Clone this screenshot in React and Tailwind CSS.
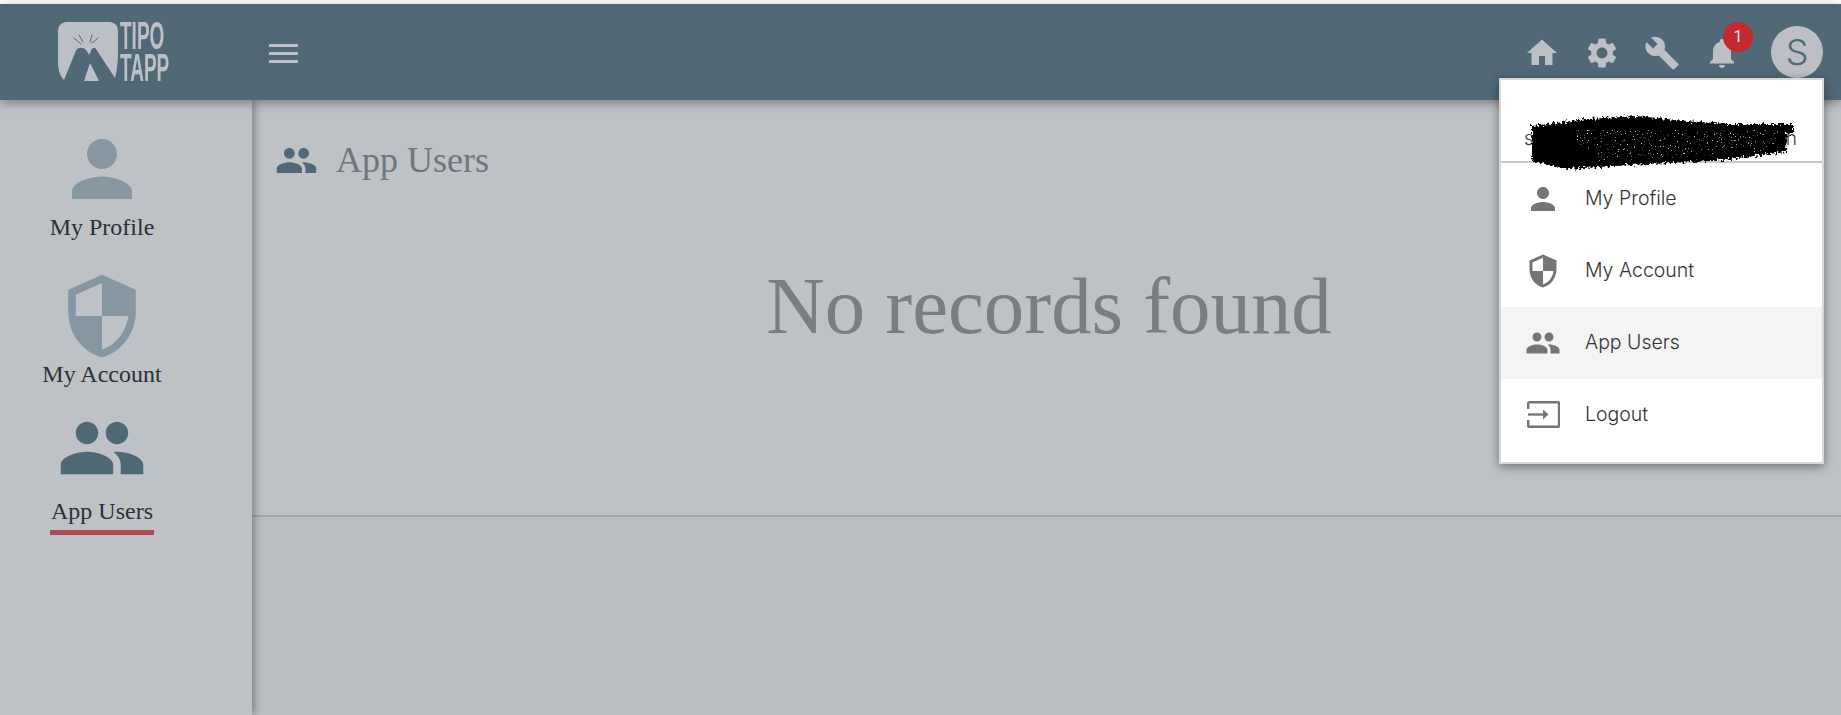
import React from 'react';

const PERSON = "M12 12c2.21 0 4-1.79 4-4s-1.79-4-4-4-4 1.79-4 4 1.79 4 4 4zm0 2c-2.67 0-8 1.34-8 4v2h16v-2c0-2.66-5.33-4-8-4z";
const SHIELD = "M12 1L3 5v6c0 5.55 3.84 10.74 9 12 5.16-1.26 9-6.45 9-12V5l-9-4zm0 10.99h7c-.53 4.12-3.28 7.79-7 8.94V12H5V6.3l7-3.11v8.8z";
const PEOPLE = "M16 11c1.66 0 2.99-1.34 2.99-3S17.66 5 16 5c-1.66 0-3 1.34-3 3s1.34 3 3 3zm-8 0c1.66 0 2.99-1.34 2.99-3S9.66 5 8 5C6.34 5 5 6.34 5 8s1.34 3 3 3zm0 2c-2.33 0-7 1.17-7 3.5V19h14v-2.5c0-2.33-4.67-3.5-7-3.5zm8 0c-.29 0-.62.02-.97.05 1.16.84 1.97 1.97 1.97 3.45V19h6v-2.5c0-2.33-4.67-3.5-7-3.5z";
const HOME = "M10 20v-6h4v6h5v-8h3L12 3 2 12h3v8z";
const GEAR = "M19.14 12.94c.04-.3.06-.61.06-.94 0-.32-.02-.64-.07-.94l2.03-1.58c.18-.14.23-.41.12-.61l-1.92-3.32c-.12-.22-.37-.29-.59-.22l-2.39.96c-.5-.38-1.03-.7-1.62-.94l-.36-2.54c-.04-.24-.24-.41-.48-.41h-3.84c-.24 0-.43.17-.47.41l-.36 2.54c-.59.24-1.13.57-1.62.94l-2.39-.96c-.22-.08-.47 0-.59.22L2.74 8.87c-.12.21-.08.47.12.61l2.03 1.58c-.05.3-.09.63-.09.94s.02.64.07.94l-2.03 1.58c-.18.14-.23.41-.12.61l1.92 3.32c.12.22.37.29.59.22l2.39-.96c.5.38 1.03.7 1.62.94l.36 2.54c.05.24.24.41.48.41h3.84c.24 0 .44-.17.47-.41l.36-2.54c.59-.24 1.13-.56 1.62-.94l2.39.96c.22.08.47 0 .59-.22l1.92-3.32c.12-.22.07-.47-.12-.61l-2.01-1.58zM12 15.6c-1.98 0-3.6-1.62-3.6-3.6s1.62-3.6 3.6-3.6 3.6 1.62 3.6 3.6-1.62 3.6-3.6 3.6z";
const WRENCH = "M22.7 19l-9.1-9.1c.9-2.3.4-5-1.5-6.9-2-2-5-2.4-7.4-1.3L9 6 6 9 1.6 4.7C.4 7.1.9 10.1 2.9 12.1c1.9 1.9 4.6 2.4 6.9 1.5l9.1 9.1c.4.4 1 .4 1.4 0l2.3-2.3c.5-.4.5-1.1.1-1.4z";
const BELL = "M12 22c1.1 0 2-.9 2-2h-4c0 1.1.89 2 2 2zm6-6v-5c0-3.07-1.64-5.64-4.5-6.32V4c0-.83-.67-1.5-1.5-1.5s-1.5.67-1.5 1.5v.68C7.63 5.36 6 7.92 6 11v5l-2 2v1h16v-1l-2-2z";

const Icon = ({ d, className }) => (
  <svg viewBox="0 0 24 24" fill="currentColor" className={className}>
    <path d={d} />
  </svg>
);

const LogoutIcon = () => (
  <svg viewBox="0 0 33 27" fill="none" stroke="#757575" strokeWidth="2.4" className="w-[33px] h-[27px]">
    <path d="M1.2 8V2.6a1.4 1.4 0 0 1 1.4-1.4h28a1.4 1.4 0 0 1 1.4 1.4v21.8a1.4 1.4 0 0 1-1.4 1.4h-28a1.4 1.4 0 0 1-1.4-1.4V19" />
    <path d="M1 13.5h19" />
    <path d="M16 8.5l5.5 5-5.5 5" fill="#757575" stroke="none" />
  </svg>
);

const Logo = () => (
  <svg viewBox="0 0 60 60" className="w-[60px] h-[60px]">
    <path d="M9 0H51C57 0 60 4 60 9V30C60 40 59 48 57 56L38 27C37 25 34 25 33 29L31 33C29 28 26 25 22 26C19 26 18 28 17 31L6 58C2 54 0 48 0 40V9C0 4 3 0 9 0Z" fill="#bcc0c6" />
    <path d="M32 41L41 59H26Z" fill="#bcc0c6" />
    <g stroke="#516876" strokeWidth="1" strokeLinecap="round">
      <path d="M16 16L23 22" />
      <path d="M21 13L25 20" />
      <path d="M34 13L32 20" />
      <path d="M40 16L34 21" />
    </g>
  </svg>
);

// the address is blacked out in the picture, only its first and last letters show
const Scribble = () => (
  <svg viewBox="0 0 265 56" className="absolute left-[29px] top-[36px] w-[265px] h-[56px] overflow-visible">
    <defs>
      <filter id="rough" x="-5%" y="-20%" width="110%" height="140%">
        <feTurbulence type="fractalNoise" baseFrequency="0.4" numOctaves="2" seed="4" result="n" />
        <feDisplacementMap in="SourceGraphic" in2="n" scale="8" />
      </filter>
      <filter id="speckle" x="0" y="0" width="100%" height="100%">
        <feTurbulence type="fractalNoise" baseFrequency="0.7" numOctaves="2" seed="9" />
        <feColorMatrix values="0 0 0 0 0.6  0 0 0 0 0.6  0 0 0 0 0.6  0 0 0 9 -6" result="dots" />
        <feComposite in="dots" in2="SourceAlpha" operator="in" />
      </filter>
    </defs>
    <path filter="url(#rough)" fill="#000" d="M2 10L57 3L107 0L157 5L197 8L263 8L263 17L257 18L256 36L183 45L117 48L37 53L2 45Z" />
    <path filter="url(#speckle)" fill="#000" d="M40 14L250 14L250 34L180 40L60 46Z" />
  </svg>
);

const menuItems = [
  { label: 'My Profile', d: PERSON },
  { label: 'My Account', d: SHIELD },
  { label: 'App Users', d: PEOPLE, active: true },
  { label: 'Logout', logout: true },
];

const App = () => {
  return (
    <div className="relative w-[1841px] h-[715px] overflow-hidden bg-white pt-1 font-['Liberation_Serif',serif]">
      {/* Top bar */}
      <header className="relative z-10 h-24 bg-[#516876] shadow-[0_3px_10px_rgba(0,0,0,0.35)] flex items-center pl-[58px] pr-[18px]">
        <div className="flex items-center w-[211px]">
          <Logo />
          <div className="ml-[2px] w-[50px] font-['Liberation_Sans',sans-serif] font-bold text-[38px] leading-8 text-[#bcc0c6]">
            <div className="origin-left scale-x-[0.5] whitespace-nowrap">TIPO</div>
            <div className="origin-left scale-x-[0.5] whitespace-nowrap">TAPP</div>
          </div>
        </div>
        <div className="flex flex-col gap-[5px] w-[29px] mt-[2px]">
          <span className="h-[3px] bg-[#bcc0c6]" />
          <span className="h-[3px] bg-[#bcc0c6]" />
          <span className="h-[3px] bg-[#bcc0c6]" />
        </div>

        <div className="ml-auto flex items-center text-[#bcc0c6]">
          <div className="flex gap-6 mr-[31px] mt-[2px]">
            <Icon d={HOME} className="w-9 h-9" />
            <Icon d={GEAR} className="w-9 h-9" />
            <Icon d={WRENCH} className="w-9 h-9" />
            <div className="relative w-9 h-9">
              <Icon d={BELL} className="w-9 h-9" />
              <span className="absolute -top-[13px] left-[19px] w-[30px] h-[30px] rounded-full bg-[#c5282f] flex items-center justify-center font-['Roboto',sans-serif] text-[17px] text-[#e8e0e0]">1</span>
            </div>
          </div>
          <div className="w-[52px] h-[52px] rounded-full bg-[#bcc0c6] flex items-center justify-center font-['Inter',sans-serif] text-[36px] font-light text-[#516876]">S</div>
        </div>
      </header>

      <div className="flex h-[615px]">
        {/* Sidebar */}
        <aside className="relative z-[5] w-[252px] pr-12 bg-[#bec2c7] shadow-[3px_0_8px_rgba(0,0,0,0.3)] flex flex-col items-center text-[24px] leading-7 text-[#2e3033]">
          <div className="flex flex-col items-center mt-6">
            <Icon d={PERSON} className="w-[90px] h-[90px] text-[#8797a2]" />
            <span className="-mt-px">My Profile</span>
          </div>
          <div className="flex flex-col items-center mt-[30px]">
            <Icon d={SHIELD} className="w-[90px] h-[90px] text-[#8797a2]" />
            <span className="-mt-px">My Account</span>
          </div>
          <div className="flex flex-col items-center mt-[15px]">
            <Icon d={PEOPLE} className="w-[90px] h-[90px] text-[#516876]" />
            <span className="mt-1 px-px pb-[5px] border-b-[5px] border-[#b04a57]">App Users</span>
          </div>
        </aside>

        {/* Content */}
        <main className="flex-1 bg-[#babfc3]">
          <section className="h-[417px] bg-[#bec1c6] border-b-2 border-[#a3a7ab] pl-[23px] pt-[38px]">
            <div className="flex items-center gap-[18px] text-[#6f767c]">
              <Icon d={PEOPLE} className="w-[43px] h-[43px] text-[#516876]" />
              <h2 className="text-[36px] leading-[44px]">App Users</h2>
            </div>
            <p className="mt-[74px] text-center text-[80.8px] leading-[100px] text-[#7a7e82] -ml-[18px]">No records found</p>
          </section>
        </main>
      </div>

      {/* Profile menu */}
      <div className="absolute z-20 top-[78px] left-[1499px] w-[325px] h-[386px] bg-white border-2 border-[#d8d8d8] shadow-[0_3px_10px_rgba(0,0,0,0.4)]">
        <div className="relative h-[83px] border-b-2 border-[#c8c8c8] flex items-end justify-between pl-[23px] pr-[25px] pb-[10px] font-['Inter',sans-serif] font-light text-[19px] leading-[24px] text-[#3d3d3d]">
          <span>s</span>
          <span>h</span>
          <Scribble />
        </div>
        {menuItems.map(item => (
          <div key={item.label} className={`h-[72px] pb-px flex items-center pl-[24px] font-['Inter',sans-serif] font-light text-[19.5px] text-[#333333] ${item.active ? 'bg-[#f4f4f4]' : ''}`}>
            <span className="w-[36px] h-9 flex items-center justify-center text-[#757575] mr-[24px]">
              {item.logout ? <LogoutIcon /> : <Icon d={item.d} className="w-9 h-9" />}
            </span>
            {item.label}
          </div>
        ))}
      </div>
    </div>
  );
};

export default App;
